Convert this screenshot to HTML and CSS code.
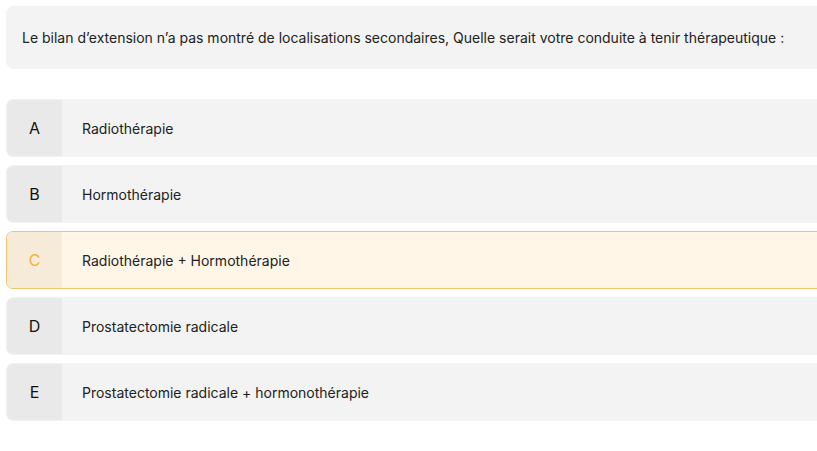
FILE: index.html
```html
<!DOCTYPE html>
<html lang="fr">
<head>
<meta charset="utf-8">
<link rel="stylesheet" href="styles.css">
</head>
<body>
<div class="quiz">
  <div class="question">Le bilan d’extension n’a pas montré de localisations secondaires, Quelle serait votre conduite à tenir thérapeutique :</div>
  <div class="options">
    <div class="option"><div class="letter">A</div><div class="label">Radiothérapie</div></div>
    <div class="option"><div class="letter">B</div><div class="label">Hormothérapie</div></div>
    <div class="option selected"><div class="letter">C</div><div class="label">Radiothérapie + Hormothérapie</div></div>
    <div class="option"><div class="letter">D</div><div class="label">Prostatectomie radicale</div></div>
    <div class="option"><div class="letter">E</div><div class="label">Prostatectomie radicale + hormonothérapie</div></div>
  </div>
</div>
</body>
</html>
```
FILE: styles.css
```css
html, body {
  margin: 0;
  padding: 0;
  background: #ffffff;
  overflow: hidden;
}
body {
  font-family: Inter, "Noto Sans", sans-serif;
  color: #1f1f1f;
}
.quiz {
  padding: 6px 0 0 6px;
  width: 840px;
}
.question {
  background: #f3f3f3;
  border-radius: 8px;
  height: 63px;
  box-sizing: border-box;
  padding: 0 16px;
  display: flex;
  align-items: center;
  font-size: 14px;
  color: #222;
}
.options {
  margin-top: 30px;
  display: flex;
  flex-direction: column;
  gap: 8px;
}
.option {
  display: flex;
  height: 58px;
  box-sizing: border-box;
  background: #f3f3f3;
  border: 1px solid #f3f3f3;
  border-radius: 7px;
  overflow: hidden;
  align-items: stretch;
}
.letter {
  width: 55px;
  flex: none;
  background: #e9e9e9;
  display: flex;
  align-items: center;
  justify-content: center;
  font-size: 16px;
  color: #111;
}
.label {
  display: flex;
  align-items: center;
  padding-left: 20px;
  font-size: 14px;
  color: #222;
}
.option.selected {
  background: #fff6e8;
  border-color: #ecc36f;
}
.option.selected .letter {
  background: #f6ebd9;
  color: #f2b33d;
}
```
